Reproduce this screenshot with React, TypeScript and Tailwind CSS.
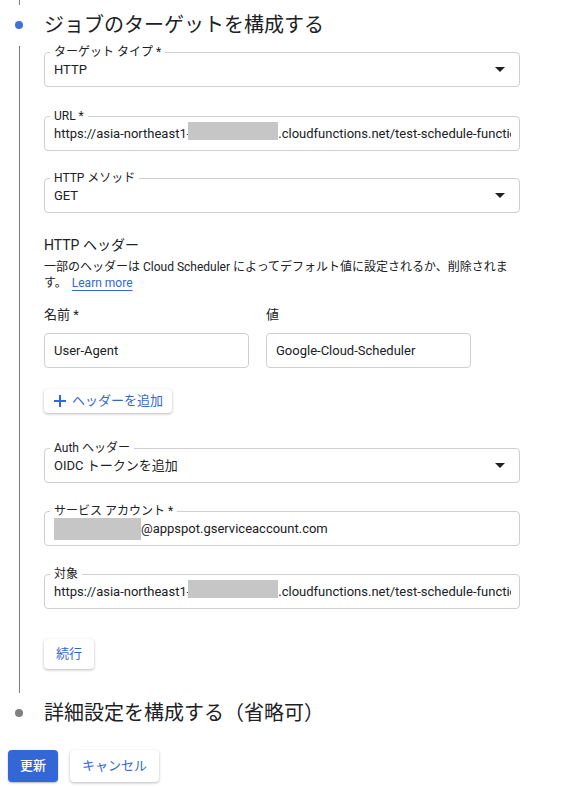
import React from "react";

const FONT = { fontFamily: "Roboto, 'Noto Sans CJK JP', 'Noto Sans', sans-serif" };

function Arrow() {
  return (
    <svg className="absolute right-[14px] top-[14px]" width="10" height="5" viewBox="0 0 10 5">
      <path d="M0 0H10L5 5Z" fill="#202124" />
    </svg>
  );
}

function Field({
  label,
  children,
  select,
  className = "",
}: {
  label?: string;
  children: React.ReactNode;
  select?: boolean;
  className?: string;
}) {
  return (
    <div className={`relative h-[35px] rounded-[4px] border border-[#cfcfcf] bg-white ${className}`}>
      {label && (
        <span className="absolute left-[5px] top-[-8px] bg-white px-[4px] text-[12px] leading-[14px] text-[#202124]">
          {label}
        </span>
      )}
      <div className="flex h-full items-center pl-[9px] pr-[8px] text-[13px] text-[#202124]">
        <div className="flex min-w-0 flex-1 items-center overflow-hidden whitespace-nowrap">{children}</div>
      </div>
      {select && <Arrow />}
    </div>
  );
}

function Redact({ w, h, className = "" }: { w: string; h: string; className?: string }) {
  return <span className={`inline-block shrink-0 bg-[#c6c6c6] ${w} ${h} ${className}`} />;
}

export default function App() {
  return (
    <div className="min-h-[787px] w-[564px] bg-white text-[#202124]" style={FONT}>
      {/* Step 1 heading */}
      <div className="flex h-[46px]">
        <div className="flex w-[44px] shrink-0 flex-col">
          <div className="ml-[19px] h-[5px] w-px bg-[#7a7a7a]" />
          <div className="ml-[15px] mt-[16px] h-[8px] w-[8px] rounded-full bg-[#3b73df]" />
        </div>
        <div className="pt-[11px] text-[20px] leading-[28px]">ジョブのターゲットを構成する</div>
      </div>

      {/* Step 1 content */}
      <div className="flex">
        <div className="flex w-[44px] shrink-0">
          <div className="ml-[19px] w-px bg-[#7a7a7a]" />
        </div>
        <div className="w-[476px] pb-[24px] pt-[6px]">
          <Field label="ターゲット タイプ *" select>
            HTTP
          </Field>
          <Field label="URL *" className="mt-[29px]">
            <span>https://asia-northeast1-</span>
            <Redact w="w-[90px]" h="h-[18px]" className="mb-[6px] -ml-[2px]" />
            <span>.cloudfunctions.net/test-schedule-function</span>
          </Field>
          <Field label="HTTP メソッド" select className="mt-[27px]">
            GET
          </Field>

          <div className="mt-[22px] text-[14px] leading-[20px]">HTTP ヘッダー</div>
          <p className="mt-[4px] text-[12px] leading-[16px] text-[#202124]">
            一部のヘッダーは Cloud Scheduler によってデフォルト値に設定されるか、削除されます。{" "}
            <span className="ml-[2px] text-[#3367d6] underline underline-offset-[3px]">Learn more</span>
          </p>

          <div className="mt-[16px] flex gap-[17px] text-[13px] leading-[16px]">
            <div className="w-[205px]">名前 *</div>
            <div className="w-[205px]">値</div>
          </div>
          <div className="mt-[10px] flex gap-[17px]">
            <Field className="w-[205px]">User-Agent</Field>
            <Field className="w-[205px]">Google-Cloud-Scheduler</Field>
          </div>

          <button className="mt-[21px] flex h-[24px] w-[128px] items-center gap-[6px] rounded-[4px] bg-white pl-[10px] text-[13px] text-[#3367d6] shadow-[0_1px_3px_rgba(0,0,0,0.28)]">
            <svg width="12" height="12" viewBox="0 0 12 12">
              <path d="M5 0h2v5h5v2H7v5H5V7H0V5h5z" fill="#3367d6" />
            </svg>
            <span>ヘッダーを追加</span>
          </button>

          <Field label="Auth ヘッダー" select className="mt-[35px]">
            OIDC トークンを追加
          </Field>
          <Field label="サービス アカウント *" className="mt-[28px]">
            <Redact w="w-[92px]" h="h-[22px]" className="-ml-[5px]" />
            <span>@appspot.gserviceaccount.com</span>
          </Field>
          <Field label="対象" className="mt-[28px]">
            <span>https://asia-northeast1-</span>
            <Redact w="w-[90px]" h="h-[18px]" className="mb-[6px] -ml-[2px]" />
            <span>.cloudfunctions.net/test-schedule-function</span>
          </Field>

          <button className="mt-[30px] flex h-[30px] w-[50px] items-center justify-center rounded-[4px] bg-white text-[13px] text-[#3367d6] shadow-[0_1px_3px_rgba(0,0,0,0.28)]">
            続行
          </button>
        </div>
      </div>

      {/* Step 2 heading */}
      <div className="flex h-[40px] items-center">
        <div className="flex w-[44px] shrink-0">
          <div className="ml-[15px] h-[8px] w-[8px] rounded-full bg-[#808080]" />
        </div>
        <div className="text-[20px] leading-[28px]">詳細設定を構成する（省略可）</div>
      </div>

      {/* Actions */}
      <div className="mt-[17px] flex gap-[12px] pl-[8px]">
        <button className="flex h-[32px] w-[50px] items-center justify-center rounded-[4px] bg-[#3367d6] text-[13px] font-medium text-white shadow-[0_1px_2px_rgba(0,0,0,0.3)]">
          更新
        </button>
        <button className="flex h-[32px] w-[89px] items-center justify-center rounded-[4px] bg-white text-[13px] text-[#3367d6] shadow-[0_1px_3px_rgba(0,0,0,0.28)]">
          キャンセル
        </button>
      </div>
    </div>
  );
}
